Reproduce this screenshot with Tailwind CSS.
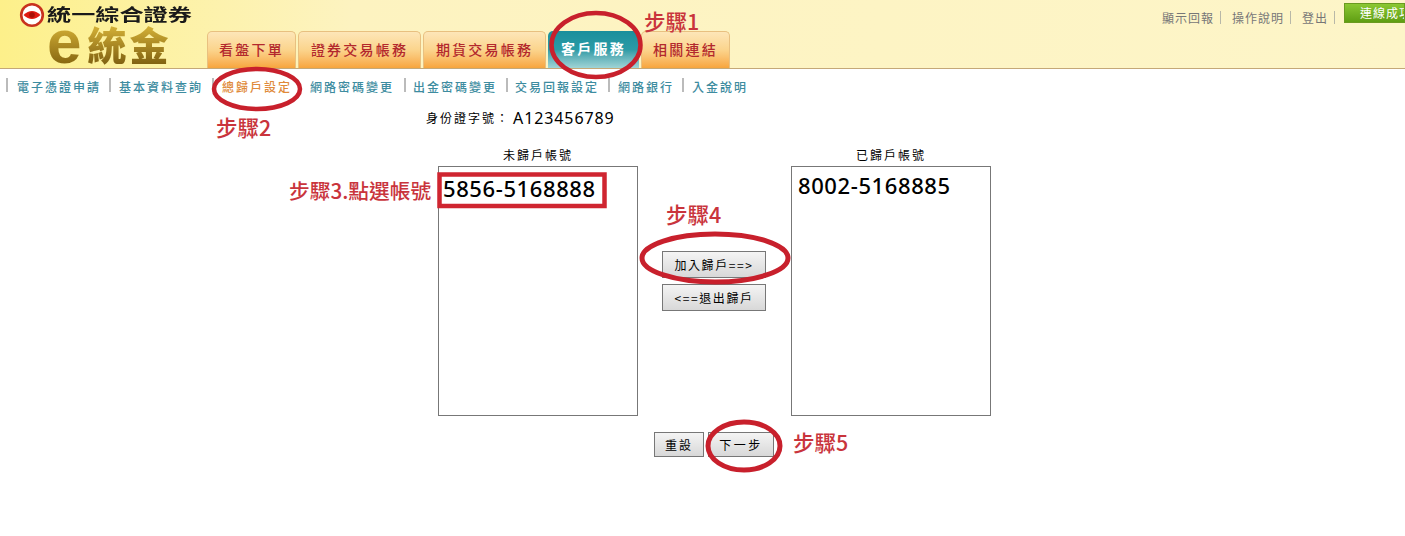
<!DOCTYPE html>
<html lang="zh-Hant">
<head>
<meta charset="utf-8">
<script src="https://cdn.jsdelivr.net/npm/@tailwindcss/browser@4"></script>
<title>總歸戶設定</title>
</head>
<body class="bg-white font-['Noto_Sans_CJK_TC','Liberation_Sans',sans-serif] text-black">
<div class="relative w-[1405px] h-[536px] overflow-hidden">

  <header class="relative h-[69px] flex border-b border-[#c4a878] bg-gradient-to-r from-[#fdf08a] via-[#fdf3c0] via-25% to-[#fdf5c8]">
    <div class="w-[206px] shrink-0 relative">
      <div class="flex items-center gap-[2px] pl-[19px] pt-[2px] h-[27px]">
        <svg width="26" height="26" viewBox="0 0 26 26"><circle cx="13" cy="13" r="10.8" fill="#fff" stroke="#c8321e" stroke-width="2.6"/><path d="M4.5 13Q13 5 21.5 13Q13 21 4.5 13Z" fill="#e01a12"/><circle cx="13" cy="13" r="2.8" fill="#a81008"/></svg>
        <span class="text-[17px] leading-none font-bold text-[#1a1a1a] origin-left scale-x-[1.42] whitespace-nowrap -mt-[3px]">統一綜合證券</span>
      </div>
      <div class="absolute left-[47px] top-[19px] flex items-end h-[46px] font-black">
        <span class="text-[62px] leading-[46px] font-['Liberation_Sans'] mr-[6px] bg-gradient-to-b from-[#e0bc3c] to-[#86660f] bg-clip-text text-transparent">e</span><span class="text-[39px] leading-[44px] tracking-[3px] bg-gradient-to-b from-[#e0bc3c] to-[#7f6010] bg-clip-text text-transparent">統金</span>
      </div>
    </div>

    <nav class="flex items-end gap-[2px] h-[68px] pl-[1px] text-[14px] font-medium tracking-[2.2px] leading-none">
      <a class="h-[37px] w-[89px] pb-[3px] flex items-center justify-center rounded-t-[5px] border border-b-0 border-[#e8c080] bg-gradient-to-b from-[#fde6b8] via-[#fbd48c] to-[#f7a53c] text-[#b3282d]">看盤下單</a>
      <a class="h-[37px] w-[123px] pb-[3px] flex items-center justify-center rounded-t-[5px] border border-b-0 border-[#e8c080] bg-gradient-to-b from-[#fde6b8] via-[#fbd48c] to-[#f7a53c] text-[#b3282d]">證券交易帳務</a>
      <a class="h-[37px] w-[123px] pb-[3px] flex items-center justify-center rounded-t-[5px] border border-b-0 border-[#e8c080] bg-gradient-to-b from-[#fde6b8] via-[#fbd48c] to-[#f7a53c] text-[#b3282d]">期貨交易帳務</a>
      <a class="h-[37px] w-[91px] pb-[3px] flex items-center justify-center rounded-t-[5px] bg-gradient-to-b from-[#1a8f9c] via-[#2a9ba6] to-[#9fd4d6] text-white font-bold">客戶服務</a>
      <a class="h-[37px] w-[89px] pb-[3px] flex items-center justify-center rounded-t-[5px] border border-b-0 border-[#e8c080] bg-gradient-to-b from-[#fde6b8] via-[#fbd48c] to-[#f7a53c] text-[#b3282d]">相關連結</a>
    </nav>

    <div class="ml-auto flex items-start text-[12px] leading-none tracking-[1px] text-[#777]">
      <div class="flex items-center pt-[11px] gap-[6px]">
        <span>顯示回報</span><i class="w-px h-[13px] bg-[#b8b8a8]"></i>
        <span class="ml-[5px]">操作說明</span><i class="w-px h-[13px] bg-[#b8b8a8]"></i>
        <span class="ml-[5px]">登出</span><i class="w-px h-[13px] bg-[#b8b8a8]"></i>
      </div>
      <div class="ml-[9px] mt-[3px] w-[61px] h-[20px] overflow-hidden whitespace-nowrap bg-gradient-to-b from-[#8cc832] to-[#5f9e12] text-white pl-[15px] pt-[3px] border border-[#6a9a20]">連線成功</div>
    </div>
  </header>

  <nav class="flex items-center h-[36px] pl-[6px] text-[12px] font-medium leading-none tracking-[2px] text-[#3d8ca0]">
    <i class="w-[2px] h-[14px] bg-[#bbb] -mt-[4px]"></i><a class="ml-[9px] mr-[8px]">電子憑證申請</a>
    <i class="w-[2px] h-[14px] bg-[#bbb] -mt-[4px]"></i><a class="ml-[8px] mr-[9px]">基本資料查詢</a>
    <i class="w-[2px] h-[14px] bg-[#bbb] -mt-[4px]"></i><a class="ml-[8px] mr-[18px] text-[#e08a3a]">總歸戶設定</a>
    <a class="mr-[10px]">網路密碼變更</a>
    <i class="w-[2px] h-[14px] bg-[#bbb] -mt-[4px]"></i><a class="ml-[7px] mr-[9px]">出金密碼變更</a>
    <i class="w-[2px] h-[14px] bg-[#bbb] -mt-[4px]"></i><a class="ml-[7px] mr-[9px]">交易回報設定</a>
    <i class="w-[2px] h-[14px] bg-[#bbb] -mt-[4px]"></i><a class="ml-[8px] mr-[8px]">網路銀行</a>
    <i class="w-[2px] h-[14px] bg-[#bbb] -mt-[4px]"></i><a class="ml-[8px]">入金說明</a>
  </nav>

  <main class="flex flex-col">
    <p class="pl-[426px] h-[26px] flex items-center text-[12px] tracking-[2px]">身份證字號：<span class="text-[16px] tracking-[0.9px] font-['Noto_Sans','Liberation_Sans',sans-serif] ml-[3px]">A123456789</span></p>

    <div class="flex mt-[15px] pl-[438px]">
      <section class="w-[200px]">
        <h2 class="h-[20px] text-center text-[12px] leading-[18px] font-normal tracking-[2px]">未歸戶帳號</h2>
        <div class="h-[250px] border border-[#777] pl-[4px] pt-[7px] text-[22px] leading-[28px] tracking-[0.6px] font-['Noto_Sans',sans-serif] font-medium">5856-5168888</div>
      </section>
      <div class="w-[153px] flex flex-col items-center pt-[105px] gap-[6px]">
        <button class="w-[104px] h-[27px] -ml-[1px] border border-[#777] bg-gradient-to-b from-[#f4f4f4] to-[#d8d8d8] text-[12px] tracking-[1.6px] leading-none">加入歸戶==&gt;</button>
        <button class="w-[104px] h-[27px] -ml-[1px] border border-[#777] bg-gradient-to-b from-[#f4f4f4] to-[#d8d8d8] text-[12px] tracking-[1.6px] leading-none">&lt;==退出歸戶</button>
      </div>
      <section class="w-[200px]">
        <h2 class="h-[20px] text-center text-[12px] leading-[18px] font-normal tracking-[2px]">已歸戶帳號</h2>
        <div class="h-[250px] border border-[#777] pl-[6px] pt-[4px] text-[22px] leading-[28px] tracking-[0.6px] font-['Noto_Sans',sans-serif] font-medium">8002-5168885</div>
      </section>
    </div>

    <div class="flex gap-[4px] mt-[16px] pl-[654px]">
      <button class="w-[50px] h-[25px] border border-[#777] bg-gradient-to-b from-[#f4f4f4] to-[#d8d8d8] text-[12px] tracking-[2px] leading-none">重設</button>
      <button class="w-[66px] h-[25px] border border-[#777] bg-gradient-to-b from-[#f4f4f4] to-[#d8d8d8] text-[12px] tracking-[2.5px] leading-none">下一步</button>
    </div>
  </main>

  <!-- hand-drawn annotations lying over the page -->
  <svg class="absolute inset-0 pointer-events-none" width="1405" height="536" fill="none" stroke="#c8202c" stroke-width="4.5">
    <ellipse cx="596" cy="45" rx="44.5" ry="32"/>
    <ellipse cx="257" cy="89" rx="43" ry="20"/>
    <ellipse cx="715" cy="258" rx="73" ry="24" stroke-width="5"/>
    <ellipse cx="744" cy="446" rx="36" ry="24" stroke-width="5"/>
    <rect x="439.5" y="174.5" width="165" height="31.5" stroke="#cf2530" stroke-width="4.5"/>
  </svg>
  <div class="absolute left-[644px] top-[8px] text-[21.5px] leading-[26px] font-medium text-[#c9343c]">步驟1</div>
  <div class="absolute left-[216px] top-[114px] text-[21.5px] leading-[26px] font-medium text-[#c9343c]">步驟2</div>
  <div class="absolute left-[289px] top-[177px] text-[20.7px] leading-[26px] font-medium text-[#c9343c]">步驟3.點選帳號</div>
  <div class="absolute left-[666px] top-[201px] text-[21.5px] leading-[26px] font-medium text-[#c9343c]">步驟4</div>
  <div class="absolute left-[793px] top-[429px] text-[21.5px] leading-[26px] font-medium text-[#c9343c]">步驟5</div>
</div>
</body>
</html>
